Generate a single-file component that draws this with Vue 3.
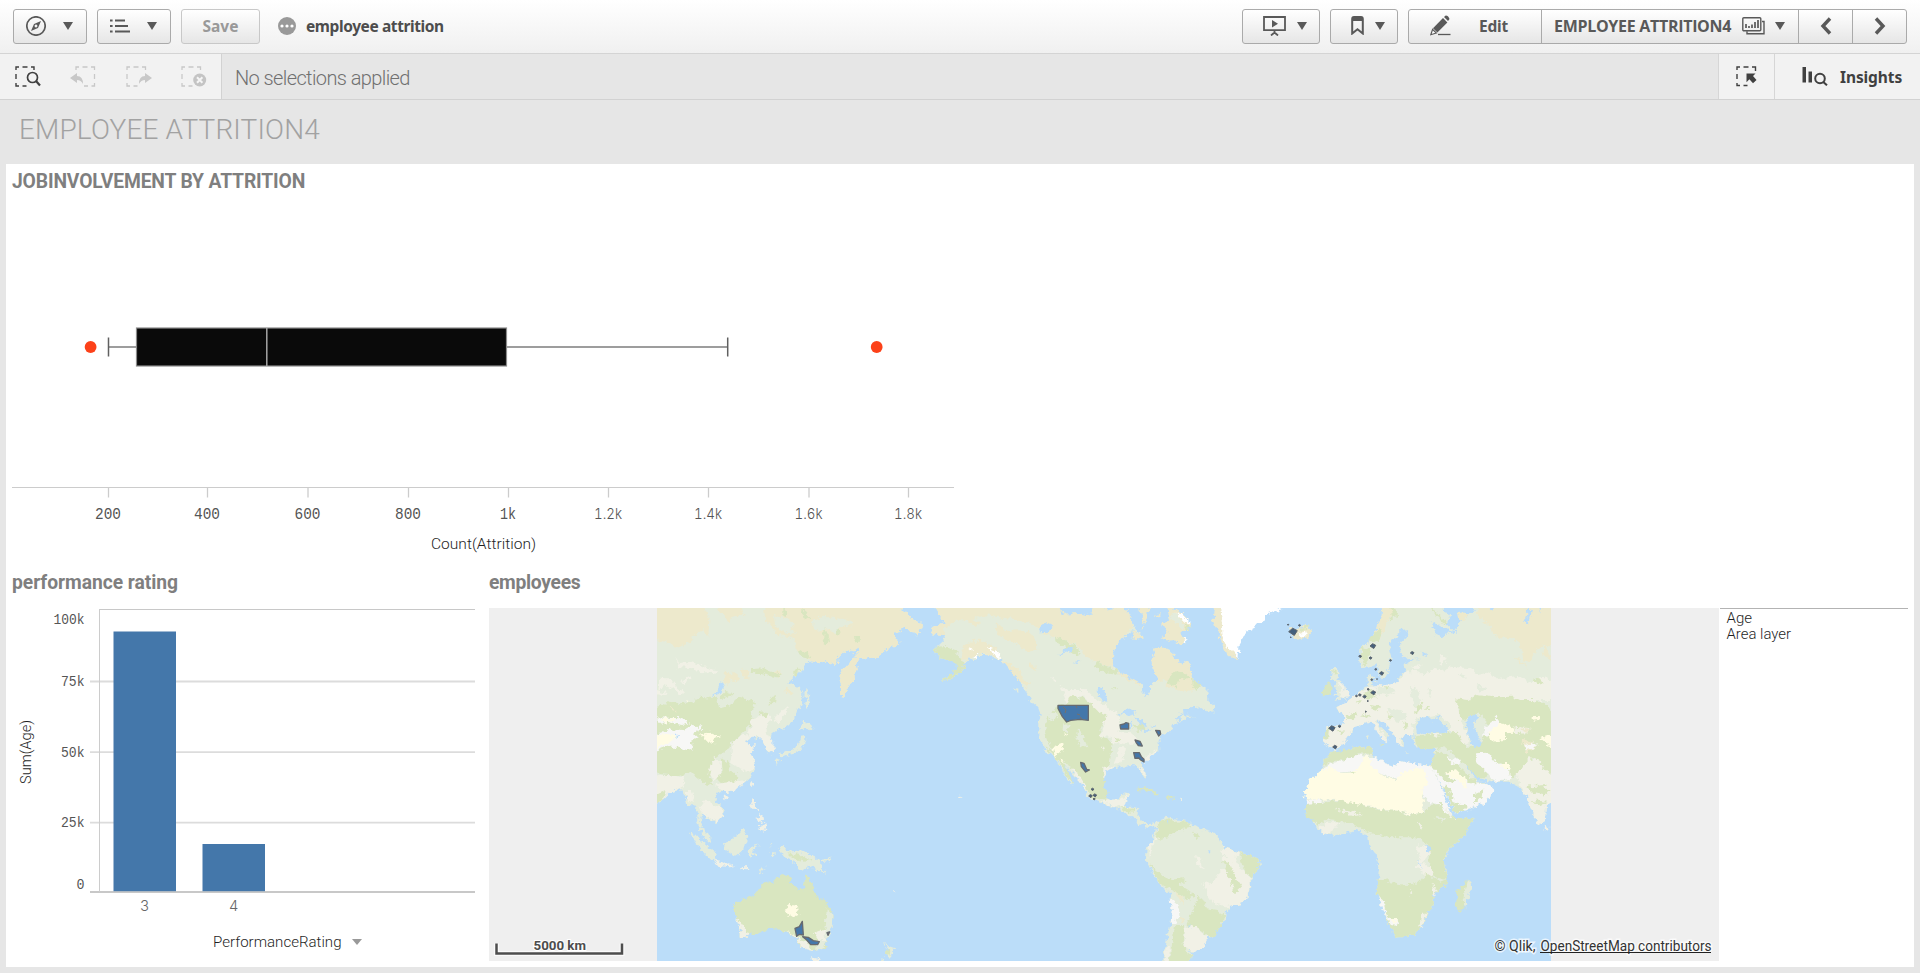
<script setup>
const boxTicks = [
  { x: 108.5, label: '200', w: 26 },
  { x: 207.5, label: '400', w: 26 },
  { x: 308, label: '600', w: 26 },
  { x: 408.5, label: '800', w: 26 },
  { x: 508.5, label: '1k', w: 16 },
  { x: 608.5, label: '1.2k', w: 28 },
  { x: 708.5, label: '1.4k', w: 28 },
  { x: 809, label: '1.6k', w: 28 },
  { x: 908.5, label: '1.8k', w: 28 },
]
const barTicks = [
  { y: 609.5, ly: 624, label: '100k', w: 31 },
  { y: 681.5, ly: 686, label: '75k', w: 23.5 },
  { y: 752.2, ly: 757, label: '50k', w: 23.5 },
  { y: 822.6, ly: 827, label: '25k', w: 23.5 },
  { y: 892, ly: 889, label: '0', w: 8 },
]
const bars = [
  { x: 113.5, y: 631.5, label: '3' },
  { x: 202.5, y: 844, label: '4' },
]

const sea = '#bbddf9', base = '#e4ecdc', tan = '#ede9cc', green = '#d9e6c0', pale = '#f1f1e6', sand = '#fffce4', ice = '#f7f7f6', white = '#fff'

const asia = [
  [base, '10,15 748,15 775,45 790,62 815,68 822,80 808,88 812,98 803,107 785,97 770,80 755,82 748,97 732,97 735,110 745,122 742,137 720,140 700,153 682,174 660,170 640,176 625,178 620,195 624,212 613,222 615,240 600,252 592,270 583,290 573,288 573,255 568,240 570,220 580,208 598,190 612,172 628,155 626,142 612,152 607,163 598,150 580,155 564,172 565,188 545,193 530,183 510,190 485,184 468,193 458,208 440,225 418,245 430,255 437,262 455,265 460,282 455,310 445,335 425,365 400,385 385,390 372,400 362,402 358,415 368,430 372,455 362,460 350,460 350,440 342,430 340,418 330,413 313,418 318,405 300,418 285,425 300,435 318,437 302,450 298,458 312,480 315,500 308,520 300,535 285,550 262,562 245,572 230,577 215,572 205,578 195,590 205,610 220,625 221,645 208,660 195,670 185,660 170,650 160,642 152,650 150,670 158,685 172,695 180,710 183,726 170,722 158,705 150,690 140,672 146,650 142,630 130,615 112,618 108,595 92,568 70,575 52,580 45,593 30,605 10,614'],
  [tan, '10,15 160,15 178,60 175,110 160,90 140,100 120,125 90,140 60,132 10,118'],
  [tan, '195,15 275,15 280,45 262,45 245,50 235,67 222,45'],
  [tan, '342,15 748,15 775,45 790,62 815,68 822,80 808,88 812,98 803,107 785,97 770,80 755,82 748,97 732,97 735,110 745,122 742,137 720,140 700,153 682,174 660,170 640,176 625,178 620,195 624,212 613,222 615,240 600,252 592,270 583,290 573,288 573,255 568,240 570,220 580,208 598,190 612,172 628,155 626,142 612,152 607,163 598,150 580,155 564,172 565,188 545,193 530,183 510,190 485,184 460,168 442,152 436,125 415,108 380,105 365,80 345,60'],
  [base, '485,60 520,50 560,55 600,60 610,75 570,82 560,100 545,95 530,85 500,92 488,78'],
  [base, '372,45 390,50 420,60 435,75 420,85 440,100 420,105 395,90 375,78'],
  [green, '458,24 478,50 468,65 455,45'], [green, '520,85 535,100 540,125 525,135 520,115'], [green, '612,108 630,108 630,122 615,124'], [green, '440,150 460,155 485,165 478,175 450,168'], [green, '430,210 452,205 440,225 430,228'],
  [green, '400,24 412,30 410,52 400,48'], [green, '560,90 572,95 568,104 560,100'],
  [pale, '75,165 85,190 120,185 150,195 170,205 205,212 190,220 150,215 130,205 85,202'], [pale, '30,235 60,235 80,260 100,275 90,285 70,268 45,255 25,270'], [pale, '90,245 125,228 120,240 100,252'], [pale, '20,270 50,278 45,288 20,282'],
  [tan, '225,215 262,222 265,245 240,240 232,255 222,240'], [tan, '275,205 298,215 295,240 278,228'], [tan, '370,210 392,215 388,235 375,232'], [tan, '405,262 428,280 420,285 408,278'],
  [green, '300,208 340,205 365,212 392,222 380,238 350,225 315,220'],
  [green, '10,325 60,305 110,312 150,290 200,295 208,325 240,315 265,290 315,305 305,345 310,370 295,385 270,405 245,425 240,445 215,460 205,468 190,480 180,505 178,535 188,555 165,550 145,535 120,515 85,528 10,520'],
  [green, '205,290 225,272 250,280 240,290 215,300'], [green, '365,290 378,288 375,305 358,315'], [green, '325,335 358,340 350,352 330,348'],
  [pale, '300,360 330,350 360,345 362,360 348,378 352,405 370,425 372,455 352,458 345,430 320,408 300,415 290,395 308,380'],
  [pale, '370,360 400,328 418,320 410,340 385,368'],
  [pale, '245,430 265,410 285,402 300,412 285,425 300,435 318,437 300,458 312,480 315,505 285,515 265,500 240,490 245,460'],
  [green, '215,475 235,490 240,510 265,530 262,550 240,552 210,548 200,535 218,515'],
  [pale, '180,500 195,475 215,485 215,515 200,540 190,545 176,520'],
  [pale, '10,530 50,525 95,530 105,545 95,565 60,578 35,600 10,610'], [green, '22,580 40,572 50,578 35,600 10,614'],
  [pale, '195,552 245,545 290,540 255,570 225,577'], [pale, '148,625 165,600 190,615 215,625 221,645 200,668 175,650 155,640'],
  [pale, '108,570 125,570 130,590 118,610 108,595'],
  [ice, '10,405 40,395 70,388 100,390 118,380 118,370 140,378 160,375 155,388 132,398 143,412 118,425 133,445 110,450 80,440 50,440 10,455'],
  [ice, '25,352 90,355 115,365 95,375 55,365 25,372'],
  [sand, '10,405 70,403 88,412 50,428 10,450'], [sand, '150,403 178,398 198,408 217,408 190,415 196,433 180,430 165,415'], [sand, '35,355 75,356 80,364 40,365'],
  [sand, '108,300 118,304 112,310'], [tan, '50,315 65,320 78,335 62,328'], [sea, '78,410 86,405 90,410 82,416'],
  [sea, '183,288 205,270 215,250 224,246 220,262 210,278 190,291'],
  [base, '467,266 474,280 480,305 472,325 465,322 468,300 463,285'], [base, '460,362 475,372 488,378 478,388 462,385 454,392 452,382'],
  [base, '455,403 464,405 466,420 460,440 450,452 435,458 415,463 395,472 388,465 405,455 425,452 440,442 450,425'], [base, '373,474 388,478 390,484 382,494 375,485'],
  [pale, '305,546 313,550 308,564 300,558'], [pale, '225,586 233,592 226,601 218,594'],
  [pale, '308,597 318,603 316,618 328,634 320,632 305,622 303,608'], [pale, '328,638 340,645 342,662 330,668 316,656 330,655'], [pale, '345,668 349,685 342,696 334,686 320,684 335,676'],
  [base, '120,696 135,702 155,725 180,745 200,760 195,784 180,776 160,757 140,732'], [pale, '194,783 215,785 240,792 256,798 240,802 205,797'], [pale, '273,801 294,802 290,808 276,806'], [base, '328,813 348,801 345,808 332,817'],
  [base, '219,730 240,722 262,705 278,687 290,697 292,712 285,730 280,750 262,769 240,760 225,750'], [base, '297,742 330,733 318,740 308,748 324,772 312,768 305,758 302,777 296,768'], [base, '358,728 364,735 360,745'], [base, '358,760 378,760 376,766 362,766'],
  [base, '385,745 400,740 412,755 440,752 465,758 490,768 510,785 512,800 528,818 505,812 485,797 465,808 438,803 438,788 415,778 400,765'], [green, '415,760 450,765 485,780 465,785 430,775'], [base, '515,780 535,776 545,769 537,784 520,786'],
  [green, '255,910 275,900 310,888 325,865 345,845 370,850 375,835 395,824 422,830 420,848 440,865 455,873 463,860 465,830 470,821 478,838 488,852 495,880 510,895 530,910 545,930 551,955 545,980 535,1005 528,1030 525,1042 505,1048 490,1053 465,1045 445,1030 435,1012 420,1005 405,995 378,985 350,990 325,1000 295,1005 285,1015 268,1012 272,990 262,965 255,940'],
  [pale, '257,955 272,965 285,985 298,1002 285,1015 268,1012 272,990'], [base, '530,925 551,945 548,975 530,1020 515,1048 495,1053 500,1030 520,1005 528,975'], [pale, '490,1000 525,985 528,1020 505,1020'], [pale, '400,990 425,1000 450,1020 480,1035 490,1053 460,1045 435,1012'], [sand, '408,925 420,915 440,918 445,945 430,952 405,935'],
  [pale, '483,1072 512,1078 505,1090 488,1090'], [base, '702,1022 715,1038 735,1045 728,1062 715,1076 708,1060 712,1045'], [green, '710,1045 722,1050 718,1065 708,1062'], [base, '690,1090 695,1074 706,1078 700,1090'], [pale, '729,870 738,872 732,876'],
]

const america = [
  [base, '40,15 60,50 75,65 50,75 30,85 40,103 75,105 70,120 48,140 45,155 60,175 85,185 110,185 115,205 90,225 65,243 90,238 115,222 135,200 130,190 145,175 165,180 175,165 205,165 235,180 255,185 270,205 285,225 300,245 310,265 325,285 335,305 352,320 362,345 355,375 355,410 365,430 380,455 400,465 412,485 425,510 445,540 460,558 455,545 440,520 430,500 425,488 440,500 460,525 480,545 495,570 498,590 520,600 550,613 580,618 600,630 625,645 645,658 655,670 680,681 705,674 700,667 685,670 665,662 655,645 658,625 630,620 610,622 618,600 628,580 610,577 595,598 570,600 555,585 550,555 553,530 560,510 580,505 610,500 635,498 655,500 665,520 675,537 681,530 672,508 665,490 680,480 700,465 718,445 715,425 722,408 735,400 750,395 755,378 775,368 800,355 832,350 800,350 790,335 810,322 835,320 850,330 880,338 884,318 865,300 862,270 845,258 820,240 815,215 800,180 790,195 765,175 750,150 725,142 698,143 705,165 695,185 697,205 712,228 705,245 690,255 690,275 680,290 668,278 665,255 640,240 600,225 578,195 580,150 600,118 608,115 640,90 670,112 640,75 630,50 610,15'],
  [tan, '40,15 610,15 630,50 640,80 608,115 600,118 580,150 578,205 540,190 500,172 480,145 450,125 410,112 375,100 340,72 285,58 190,45 150,60 110,62 75,85 70,105 40,103 30,85 50,75 75,65 60,50'],
  [tan, '230,65 255,90 300,88 340,105 355,148 320,158 290,130 260,122 232,102'], [tan, '130,135 160,122 195,122 225,145 245,175 205,165 175,160 145,178 120,180'],
  [tan, '245,180 275,190 300,215 315,245 330,250 320,262 285,230'], [tan, '330,190 350,205 345,212 330,205'], [tan, '150,50 180,70 165,78 145,65'],
  [green, '408,110 440,122 475,145 480,170 455,158 430,140 410,128'], [green, '530,185 560,200 590,210 592,222 545,215 525,200'],
  [green, '48,140 80,138 105,150 130,185 135,200 115,222 90,238 65,243 90,225 112,205 108,188 85,185 60,175 45,155'],
  [tan, '592,212 630,232 662,248 665,256 640,246 598,226'],
  [tan, '698,143 725,142 750,150 765,175 790,195 800,180 815,215 820,240 845,258 830,268 790,275 740,262 742,240 705,245 712,228 697,205 695,185 705,165'],
  [green, '742,240 765,210 785,215 810,232 800,240 775,235 770,260 745,252'], [green, '815,238 845,255 832,270 820,262'],
  [white, '200,140 222,150 245,165 240,178 225,165'], [white, '160,170 175,160 170,178'], [white, '145,150 160,140 155,155'],
  [green, '440,270 460,290 490,295 515,312 550,332 560,350 545,380 538,402 575,425 570,490 550,510 553,550 562,592 530,600 505,580 490,545 462,515 440,490 415,470 400,455 385,430 375,400 380,360 395,335 415,318 440,310'],
  [green, '370,435 400,455 430,478 460,552 440,530 425,500 405,470'],
  [pale, '422,258 445,270 470,270 500,270 530,300 565,325 600,345 600,370 592,395 630,400 655,420 640,435 600,430 580,430 570,410 532,408 550,390 550,365 560,345 530,330 510,310 490,290 450,288 440,310'],
  [base, '475,385 490,410 502,440 480,445 470,415'], [base, '430,370 450,375 440,400 428,390'], [base, '385,345 410,335 415,350 390,362'],
  [pale, '545,435 555,445 548,450'], [pale, '600,440 615,445 605,490 585,490'], [pale, '550,500 585,500 560,515 550,540'], [pale, '450,505 475,520 498,560 500,575 475,540'], [pale, '390,232 412,238 405,245'],
  [pale, '555,598 600,600 615,590 628,580 618,600 612,622 585,618 540,605'], [pale, '655,500 672,508 680,532 668,520'], [pale, '670,478 715,440 700,465 675,490'],
  [green, '605,622 645,628 640,638 615,635'], [green, '565,575 555,590 560,600 540,595'],
  [sand, '398,445 415,435 430,432 432,448 415,460 405,468'], [sand, '430,400 438,402 434,412'], [sand, '418,478 432,482 430,492'],
  [green, '642,375 665,370 680,392 650,392'], [green, '585,412 602,418 592,424'], [green, '578,260 592,266 582,270'],
  [sea, '355,85 378,68 400,78 385,95 360,97'], [sea, '415,165 430,150 455,138 460,150 435,158'], [sea, '458,188 478,186 470,192'], [sea, '530,262 548,264 562,290 555,306 540,292'],
  [sea, '598,342 625,324 648,342 625,348'], [sea, '628,362 636,356 638,378 630,392'], [sea, '640,352 668,360 682,385 665,375 648,362'], [sea, '664,396 695,385 685,395'], [sea, '690,378 712,372 705,382'],
  [sea, '420,15 432,45 470,38 500,45 520,40 520,15'], [sea, '545,15 560,28 590,24 595,15'], [sea, '772,365 795,335 780,342 768,358'],
  [tan, '638,90 650,98 672,112 650,120 635,118'], [tan, '650,15 672,50 668,90 690,24 700,15'], [tan, '700,50 722,38 720,52'],
  [tan, '728,70 750,60 740,15 775,30 800,55 815,75 805,90 785,90 785,108 800,125 780,138 765,120 745,122 725,112 745,100'], [base, '745,45 770,40 790,70 785,90 770,75'], [white, '765,34 785,42 812,68 808,76 790,62'], [green, '790,72 812,80 805,90'],
  [white, '788,112 800,120 795,126'],
  [green, '650,567 680,561 700,572 718,583 700,583 680,571 655,571'], [green, '738,590 755,588 762,598 742,599'], [pale, '780,596 788,598 783,601'], [pale, '114,588 122,587 124,593 117,593'], [base, '285,262 298,268 292,275'],
  [tan, '885,15 905,15 910,80 925,140 945,160 955,178 940,175 918,158 905,130 895,90 880,75'], [white, '900,15 1085,15 1085,24 1038,45 1025,70 980,95 960,130 955,172 945,160 925,150 908,115 905,60'],
  [base, '700,675 715,665 738,650 765,658 800,662 825,675 850,690 880,698 900,715 910,740 935,748 960,758 990,765 1015,778 1020,795 1010,812 995,830 990,865 980,895 965,912 930,921 918,935 915,960 905,975 890,995 880,1013 860,1010 855,1035 840,1050 810,1052 818,1068 795,1090 728,1090 735,1050 745,1000 755,950 755,900 750,880 715,850 695,815 678,780 680,745 700,715 708,690'],
  [green, '720,662 745,655 765,665 805,664 815,680 775,690 745,710 705,722 712,690'], [green, '820,695 838,702 832,718 820,708'], [pale, '685,735 705,715 730,710 700,725 690,775'],
  [green, '690,790 710,810 745,840 790,835 800,845 775,852 805,870 830,890 800,900 775,880 745,865 715,848'],
  [pale, '850,850 880,845 900,815 920,800 905,775 945,765 955,800 985,820 992,850 980,895 965,912 930,921 890,912 865,895'], [pale, '825,765 850,775 840,795 860,810 835,800'], [pale, '910,740 960,760 940,775 905,765'],
  [green, '960,760 990,765 1015,778 1018,800 995,830 975,815 965,790'], [green, '905,780 930,790 945,830 965,860 945,880 930,840'],
  [green, '835,890 850,900 860,925 890,930 912,945 905,975 880,1013 860,1005 835,985 800,975 812,945 822,925'],
  [pale, '790,985 820,975 850,1000 862,1010 855,1038 835,1052 810,1050 792,1042'], [green, '765,978 792,978 788,1030 800,1052 818,1068 795,1090 745,1090 755,1040'], [pale, '740,1045 750,1040 745,1090 732,1090'],
  [ice, '752,895 775,915 778,945 765,975 752,970 755,930'], [tan, '765,870 790,895 792,912 772,895'], [tan, '778,945 795,965 785,970'], [sea, '864,750 872,752 868,758'], [sea, '740,660 748,664 744,672'], [sea, '808,972 814,975 810,980'],
]

const africa = [
  [base, '456,15 455,55 440,80 430,115 400,135 388,150 388,185 400,205 425,195 440,190 445,215 455,235 475,225 475,200 485,175 478,150 480,125 500,110 510,90 535,88 530,110 510,130 512,160 530,178 560,176 575,172 540,185 523,190 528,215 510,225 505,245 480,250 450,257 430,260 420,250 430,235 425,222 412,230 415,262 400,265 385,280 370,295 345,312 318,322 325,332 342,345 342,370 330,380 290,378 288,400 282,430 300,440 312,450 340,435 350,415 365,395 375,380 400,372 425,365 435,385 460,405 465,430 475,420 470,400 450,380 440,362 448,358 470,380 490,400 500,420 516,442 522,430 510,410 525,405 550,405 553,438 590,447 615,443 615,465 605,495 570,495 550,490 505,482 500,500 465,490 430,470 430,450 425,440 370,445 330,455 305,455 285,480 275,510 240,540 222,575 230,605 225,635 245,660 265,690 295,705 340,700 380,690 415,710 418,740 440,770 450,810 445,850 440,880 460,930 480,980 500,1014 545,1005 580,975 595,935 610,925 612,880 645,860 650,825 640,780 660,740 700,710 720,680 731,653 700,657 670,650 650,610 625,570 605,530 595,500 605,510 630,550 660,600 675,640 720,628 770,605 793,570 775,550 760,545 740,545 720,515 705,500 720,500 745,535 790,545 840,545 860,555 875,575 895,580 900,620 925,675 945,660 948,615 975,595 975,15'],
  [tan, '458,15 485,15 500,35 470,60 465,90 445,115 430,115 440,80 455,55'], [green, '395,140 415,145 418,165 405,200 392,170'], [green, '418,120 440,128 455,95 445,90'],
  [green, '480,15 505,40 495,48 475,70 485,45'], [green, '600,15 625,45 655,70 640,70 610,40'],
  [tan, '735,38 762,15 975,15 975,140 940,135 920,150 905,180 885,185 872,150 875,135 850,115 810,112 790,105 785,80 765,65'], [tan, '945,120 962,180 940,165'], [tan, '850,165 880,190 895,205 870,190'],
  [pale, '505,245 525,215 560,212 580,225 610,205 640,215 660,200 720,205 745,225 780,215 800,238 860,228 900,250 940,230 975,245 975,300 700,300 680,305 690,350 700,385 660,370 625,345 570,350 545,375 555,405 525,405 510,410 516,442 500,420 490,400 465,375 448,358 435,362 460,405 475,420 465,430 435,385 425,365 400,372 375,380 350,415 340,435 312,450 300,440 282,430 290,378 330,380 342,370 342,345 320,325 385,280 415,262 450,257 480,250'],
  [pale, '630,165 650,170 640,195 625,185'], [pale, '540,200 575,195 560,210'], [base, '440,260 480,262 500,275 470,285 440,280'], [base, '475,325 520,335 535,360 500,365 480,345'], [base, '540,260 560,265 575,300 555,320 545,290'],
  [green, '350,345 380,335 375,355 355,360'], [green, '400,285 425,270 440,290 415,300'], [green, '420,315 450,322 440,332 422,325'], [green, '560,315 580,310 570,335 555,338'], [green, '470,340 495,350 480,358'], [green, '288,385 300,380 298,410 282,420'], [green, '395,345 410,340 420,355'], [green, '520,365 535,380 525,395'],
  [green, '375,305 395,300 390,312'], [green, '455,255 475,262 468,270'], [green, '580,325 605,318 598,328'], [green, '320,395 345,390 335,402'], [green, '910,235 928,238 940,250 918,250'], [base, '590,260 610,270 600,290'], [base, '690,215 710,230 695,240'], [base, '740,255 770,265 750,275'],
  [green, '675,295 715,300 740,285 790,292 850,290 870,300 910,300 945,310 975,345 975,540 960,525 935,500 915,470 890,490 870,515 840,540 780,530 760,500 730,460 690,450 700,420 710,440 730,440 755,430 780,380 745,340 720,350 690,360 690,335'],
  [pale, '660,365 690,375 715,400 715,435 690,425 660,395'],
  [green, '553,410 590,402 640,400 680,395 705,440 740,465 770,520 770,535 745,535 720,510 690,480 650,445 590,447 560,440'], [pale, '600,402 640,402 620,412'],
  [ice, '735,460 775,458 800,490 835,495 842,540 790,545 765,510 740,490'], [sand, '812,492 840,492 838,508 815,505'],
  [ice, '760,385 785,365 800,350 808,375 790,395 760,412'], [sand, '775,400 810,370 845,378 858,398 825,400 825,420 785,425'],
  [sand, '905,348 930,348 928,360 905,362'], [sand, '928,415 975,400 975,445 945,430'], [pale, '850,380 905,385 890,400 855,402'], [tan, '870,415 905,425 915,445 890,460'], [ice, '880,435 920,430 915,445 885,450'], [tan, '870,385 905,390 890,396'],
  [pale, '860,520 880,500 895,475 925,480 945,510 975,530 975,600 948,615 945,660 925,675 900,620 890,585 870,560'], [green, '890,560 940,555 962,570 950,585 905,575'], [green, '905,600 950,605 925,620'],
  [ice, '618,470 650,480 690,500 740,548 775,550 793,570 770,605 720,628 675,640 645,575 605,500'], [green, '605,495 620,450 650,465 700,510 740,550 720,550 680,525 640,520 680,545 650,550 625,520'], [sand, '640,520 680,510 710,540 708,570 690,545'], [green, '640,555 660,570 675,610 710,618 700,632 675,640 655,595'], [green, '735,580 760,568 755,590 735,610'], [ice, '650,475 690,480 695,495 665,490'],
  [ice, '275,512 300,490 330,485 380,463 430,470 465,490 500,500 505,482 550,490 605,500 630,555 650,605 670,655 640,640 630,612 600,610 560,560 430,510 300,520'],
  [green, '285,480 305,455 370,445 425,440 430,462 385,460 340,480 300,485 278,500'], [sand, '275,510 305,502 330,520 360,518 390,500 400,470 415,465 425,500 465,530 500,542 515,518 575,502 590,530 595,550 575,570 582,600 575,640 540,642 505,632 450,630 430,618 350,612 330,600 225,598 222,575 240,540'],
  [green, '360,515 372,512 378,520 362,522'], [ice, '228,600 265,598 280,608 228,612'],
  [green, '228,612 280,608 330,602 380,612 430,622 450,632 505,632 540,644 580,638 605,615 635,612 645,640 670,650 700,657 731,653 720,680 700,710 660,740 640,775 648,825 650,840 610,830 595,805 600,770 590,730 560,712 480,712 420,700 385,682 340,665 290,660 265,675 235,655 225,635'],
  [pale, '310,625 350,632 400,645 370,648'], [pale, '560,668 578,675 570,683'], [pale, '265,690 290,665 330,668 310,690 290,702'], [base, '610,650 650,655 635,665'], [pale, '645,625 665,640 670,658 655,650'],
  [pale, '555,735 590,740 600,760 575,790 600,800 612,825 590,830 560,800 570,775'], [sea, '588,740 598,735 605,750 592,758'], [sea, '562,780 570,790 580,812 572,800'],
  [green, '446,838 475,835 480,850 540,855 575,840 590,820 630,845 650,840 645,860 612,880 610,925 595,935 580,975 545,1005 500,1014 480,980 460,930 440,880'],
  [ice, '444,890 458,900 465,925 472,955 460,935'], [ice, '468,950 500,960 505,978 485,975'], [sand, '480,955 500,962 498,972'], [pale, '575,938 592,938 575,985 568,975'], [pale, '605,850 620,870 612,890'], [pale, '540,872 548,878 542,884'],
  [sea, '557,378 572,350 590,348 605,362 635,343 628,356 662,392 640,400 590,400 560,396'], [sea, '703,362 735,341 748,352 730,368 738,395 757,432 730,442 718,415 712,390'], [sea, '603,70 612,66 640,85 682,95 650,98 638,112 615,102'], [sea, '630,15 735,15 725,40 695,60 672,92 650,70 660,50'],
  [tan, '680,35 695,35 715,45 700,60 685,62'], [sea, '765,15 780,28 800,15'], [sea, '890,15 905,35 895,70 882,68 892,45'], [sea, '925,15 932,40 938,15'], [sea, '575,155 590,160 590,172 578,165'],
  [pale, '945,673 958,680 955,692 944,690'], [green, '715,836 723,855 710,890 700,930 685,936 674,918 680,870 700,858'], [base, '715,836 723,855 705,925 698,900 710,860'],
  [base, '315,198 328,212 322,235 340,250 345,270 360,280 355,292 330,300 313,303 325,290 312,285 325,270 310,262 318,247 303,235 305,212'], [pale, '325,245 340,250 345,270 360,280 355,292 330,298 335,270'], [green, '308,210 322,215 315,225'],
  [green, '283,256 298,246 306,262 300,282 278,289'], [tan, '174,76 195,92 220,74 232,76 248,95 238,110 200,119 185,108'], [white, '205,100 225,95 230,108 210,110'], [green, '205,84 238,76 230,88 210,90'],
  [base, '414,402 420,408 417,416 412,410'], [green, '447,430 460,436 455,442'], [base, '525,457 540,459 530,461'], [base, '432,240 440,240 438,248'],
]

const zones = [
  [650, '435,985 448,980 457,964 460,1005 448,1003 440,1009', '458,1010 475,1012 490,1022 508,1025 503,1034 482,1034 470,1020', '531,998 539,996 534,1006'],
  [920, '414,316 505,316 505,361 480,358 452,361 440,366 427,350 414,325', '600,375 612,372 618,368 626,370 626,387 602,387', '707,391 720,392 722,402 716,408', '645,420 660,424 667,438 655,437 648,427', '641,458 658,458 664,470 672,478 672,486 662,480 656,474 645,475', '482,487 492,490 500,508 508,510 497,516 484,500'],
]
const dots = [
  [920, 517, 568, 4], [920, 511, 588, 5], [920, 524, 586, 5], [920, 522, 597, 3],
  [1230, 188, 95, 12], [1230, 174, 74, 2], [1230, 208, 76, 3], [1230, 182, 112, 1.5], [1230, 428, 138, 8], [1230, 390, 169, 4], [1230, 421, 174, 4], [1230, 481, 181, 3], [1230, 546, 159, 5],
  [1230, 437, 208, 3], [1230, 454, 220, 6], [1230, 425, 239, 3], [1230, 441, 237, 1.5], [1230, 414, 268, 3], [1230, 429, 278, 7], [1230, 403, 290, 5], [1230, 389, 285, 4], [1230, 379, 288, 3], [1230, 413, 303, 2],
  [1230, 407, 335, 2], [1230, 305, 385, 9], [1230, 328, 379, 4], [1230, 314, 441, 6],
]
const regions = [
  { x: 650, shapes: asia },
  { x: 920, shapes: america },
  { x: 1230, shapes: africa },
]
</script>

<template>
  <div class="app">
    <header class="toolbar">
      <button class="btn nav">
        <svg width="20" height="20" viewBox="0 0 20 20"><circle cx="10" cy="10" r="9.2" fill="none" stroke="#595959" stroke-width="1.7" /><path fill-rule="evenodd" d="M15 5 12 12 5 15 8 8zM10 8.6a1.4 1.4 0 1 0 .01 0z" fill="#595959" /></svg>
        <i class="caret" />
      </button>
      <button class="btn nav">
        <svg width="20" height="14" viewBox="0 0 20 14"><path d="M0 1.4h2.6M0 6.9h2.6M0 12.4h2.6M5 1.4h10M5 6.9h13M5 12.4h15" transform="translate(0 .1)" stroke="#595959" stroke-width="2.2" /></svg>
        <i class="caret" />
      </button>
      <button class="btn save">Save</button>
      <svg class="app-dot" width="18" height="18" viewBox="0 0 18 18"><circle cx="9" cy="9" r="9" fill="#999" /><circle cx="4" cy="9" r="1.6" fill="#fff" /><circle cx="9" cy="9" r="1.6" fill="#fff" /><circle cx="14" cy="9" r="1.6" fill="#fff" /></svg>
      <span class="app-name">employee attrition</span>

      <div class="right">
        <button class="btn story">
          <svg width="24" height="20" viewBox="0 0 24 20" fill="none" stroke="#595959"><path d="M1 1h21v13.2H1z" stroke-width="1.8" /><path d="M11.5 14v3M8 19.5l3.5-3 3.5 3" stroke-width="1.8" /><path d="M9 4v7.4l6-3.7z" fill="#595959" stroke="none" /></svg>
          <i class="caret" />
        </button>
        <button class="btn mark">
          <svg width="13" height="19" viewBox="0 0 13 19"><path d="M1.200 17.500V3Q1.200 1 3 1h7q1.800 0 1.800 2v14.500l-5.300-4.300z" fill="none" stroke="#595959" stroke-width="2" /><path d="M1 5V1.500h11V5z" fill="#595959" /></svg>
          <i class="caret" />
        </button>
        <div class="group">
          <button class="seg edit">
            <svg width="21" height="21" viewBox="0 0 21 21"><path d="M3 13.200 13 3l4.400 4.400L7.400 17.600z" fill="#595959" /><path d="M2.600 14.300 6.300 18 .8 19.700z" fill="#fff" stroke="#595959" stroke-width="1.200" /><path d="M14 2 15.700.5q3 .4 3.800 3.600L18 6z" fill="#595959" /><path d="M8 19.500h12.500" stroke="#595959" stroke-width="1.300" /></svg>
            <span>Edit</span>
          </button>
          <button class="seg sheet">
            <span>EMPLOYEE ATTRITION4</span>
            <svg width="23" height="18" viewBox="0 0 23 18" fill="none" stroke="#595959" stroke-width="1.4"><rect x=".8" y=".8" width="18" height="13" rx="1" /><path d="M20 4.500h2v12.300H5v-2.500" /><path d="M4 11V7M7 11V9M10 11V7.500M13 11V5M16 11V3" stroke-width="1.700" /></svg>
            <i class="caret" />
          </button>
          <button class="seg arrow"><svg width="12" height="18" viewBox="0 0 12 18"><path d="M10 1.500 3 9l7 7.500" fill="none" stroke="#595959" stroke-width="3.400" /></svg></button>
          <button class="seg arrow last"><svg width="12" height="18" viewBox="0 0 12 18"><path d="M2 1.500 9 9l-7 7.500" fill="none" stroke="#595959" stroke-width="3.400" /></svg></button>
        </div>
      </div>
    </header>

    <section class="selections">
      <div class="sel-tools">
        <svg width="26" height="22" viewBox="0 0 26 22" fill="none" stroke="#404040" stroke-width="1.400"><path d="M1 4V1h3M7.500 1h5M16 1h3v3M1 8v5M1 17v3h3M7.500 20h4" /><circle cx="17.500" cy="11.500" r="5" stroke-width="1.700" /><path d="m21 15 4 4.500" stroke-width="2.200" /></svg>
        <svg width="26" height="22" viewBox="0 0 26 22" fill="none" stroke="#c8c8c8" stroke-width="1.300"><path d="M6 4V1h3M12.500 1h5M21 1h3.500v3M24.500 8v5M24.500 17v3h-3M18 20h-4" /><path d="M0 12 7 7v3q6 0 6 8-2-4-6-4v3z" fill="#c8c8c8" stroke="none" /></svg>
        <svg width="26" height="22" viewBox="0 0 26 22" fill="none" stroke="#c8c8c8" stroke-width="1.300"><path d="M1 4V1h3M7.500 1h5M16 1h3.500v3M1 8v5M1 17v3h3M7.500 20h4" /><path d="m26 12-7-5v3q-6 0-6 8 2-4 6-4v3z" fill="#c8c8c8" stroke="none" /></svg>
        <svg width="26" height="22" viewBox="0 0 26 22" fill="none" stroke="#c8c8c8" stroke-width="1.300"><path d="M1 4V1h3M7.500 1h5M16 1h3.500v3M1 8v5M1 17v3h3M7.500 20h4" /><circle cx="18.700" cy="14" r="6.500" fill="#c4c4c4" stroke="none" /><path d="m16 11.300 5.400 5.400m0-5.400L16 16.700" stroke="#f5f5f5" stroke-width="2" /></svg>
      </div>
      <div class="sel-text"><span>No selections applied</span></div>
      <div class="sel-mode">
        <svg width="22" height="21" viewBox="0 0 22 21"><path d="M1 4V1h3M7.500 1h5M16 1h3.500v4M1 8v5M1 17v2.500h3M7.500 19.500h4" fill="none" stroke="#404040" stroke-width="1.400" /><path d="M10.500 7.500h9l-2.500 2.500 3.500 4-3.500 3.200-3.600-3.900-2.900 2.900z" fill="#404040" /></svg>
      </div>
      <div class="insights">
        <svg width="26" height="19" viewBox="0 0 26 19"><path d="M.5 0H4v15.500H.5zM6.500 4.500H10v11H6.500z" fill="#404040" /><circle cx="18" cy="11.500" r="4.800" fill="none" stroke="#404040" stroke-width="2" /><path d="m21 14.800 4 3.500" stroke="#404040" stroke-width="2" /></svg>
        <span>Insights</span>
      </div>
    </section>

    <h1><span>EMPLOYEE ATTRITION4</span></h1>

    <main class="sheet-body">
      <section>
        <h2 class="t1"><span>JOBINVOLVEMENT BY ATTRITION</span></h2>
        <svg class="chart" width="1908" height="370" viewBox="6 198 1908 370">
          <g stroke="#7d7d7d" stroke-width="1.500">
            <path d="M108.500 347H136M507 347H728" />
            <path d="M108.500 337.500v19M727.700 337.500v19" stroke="#606060" />
            <rect x="136.500" y="328" width="370" height="38" fill="#0a0a0a" stroke="#8c8c8c" stroke-width="1.200" />
            <path d="M266.800 328v38" stroke="#a6a6a6" />
          </g>
          <circle cx="90.600" cy="347" r="5.900" fill="#fc4119" />
          <circle cx="876.700" cy="347" r="5.900" fill="#fc4119" />
          <path d="M12 487.500H954" stroke="#ccc" />
          <g v-for="t in boxTicks" :key="t.label">
            <path :d="`M${t.x} 488v9.500`" stroke="#ccc" stroke-width="1.300" />
            <text :class="t.label.includes('.') ? 'num' : 'mono'" :x="t.x - t.w / 2 - 0.500" y="519" :textLength="t.w" lengthAdjust="spacingAndGlyphs" :font-size="t.label.includes('.') ? 15 : 16">{{ t.label }}</text>
          </g>
          <text class="axis" x="431" y="549" textLength="105" lengthAdjust="spacingAndGlyphs">Count(Attrition)</text>
        </svg>
      </section>

      <div class="row">
        <section class="bar-col">
          <h2><span class="t2">performance rating</span></h2>
          <svg class="chart" width="483" height="359" viewBox="6 608 483 359">
            <g v-for="(t, i) in barTicks" :key="t.label">
              <path :d="`M${i ? 90 : 99} ${t.y}H475`" :stroke="i && i < 4 ? '#dcdcdc' : '#c8c8c8'" :stroke-width="i === 0 ? 1.200 : 1.800" />
              <text class="mono" :x="84.500 - t.w" :y="t.ly" :textLength="t.w" lengthAdjust="spacingAndGlyphs" font-size="14.500">{{ t.label }}</text>
            </g>
            <path d="M99.500 609V892" stroke="#ccc" />
            <g v-for="b in bars" :key="b.label">
              <rect :x="b.x" :y="b.y" width="62.500" :height="891.200 - b.y" fill="#4477aa" />
              <text class="num cat" :x="b.x + 31.200" y="911" text-anchor="middle" font-size="14.500">{{ b.label }}</text>
            </g>
            <text class="axis" x="213" y="947" textLength="128.500" lengthAdjust="spacingAndGlyphs">PerformanceRating</text>
            <path d="M352 939h10l-5 6z" fill="#999" />
            <text class="axis" transform="translate(30.500 784) rotate(-90)" textLength="64" lengthAdjust="spacingAndGlyphs">Sum(Age)</text>
          </svg>
        </section>

        <section class="map-col">
          <h2><span class="t3">employees</span></h2>
          <svg class="chart" width="1230" height="353" viewBox="489 608 1230 353">
            <defs>
              <clipPath id="world"><rect x="657" y="608" width="894" height="353" /></clipPath>
              <filter id="coast" x="0" y="0" width="100%" height="100%">
                <feTurbulence type="fractalNoise" baseFrequency="0.22" numOctaves="3" seed="4" />
                <feDisplacementMap in="SourceGraphic" scale="7" xChannelSelector="R" yChannelSelector="G" />
              </filter>
            </defs>
            <rect x="489" y="608" width="1230" height="353" fill="#efefef" />
            <g clip-path="url(#world)">
              <rect x="657" y="608" width="894" height="353" fill="#bbddf9" />
              <g filter="url(#coast)">
                <g v-for="r in regions" :key="r.x" :transform="`translate(${r.x} 600) scale(.33333)`">
                  <polygon v-for="(s, i) in r.shapes" :key="i" :points="s[1]" :fill="s[0]" />
                </g>
              </g>
              <g v-for="z in zones" :key="z[0]" :transform="`translate(${z[0]} 600) scale(.33333)`" fill="#4477aa" stroke="#666a70" stroke-width="4" stroke-linejoin="round">
                <polygon v-for="p in z.slice(1)" :key="p" :points="p" />
              </g>
              <path d="M1063 707l3 3-1 3M1076 706l1 2M1077 714l3 1M1080 717l2 2" stroke="#77706a" fill="none" />
              <path v-for="(d, i) in dots" :key="i" :d="`M${d[0] + d[1] / 3 - d[3] / 3} ${600 + d[2] / 3}l${d[3] / 3} ${-d[3] / 3.500} ${d[3] / 2.600} ${d[3] / 5} ${-d[3] / 4} ${d[3] / 2.500}z`" fill="#44607c" stroke="#5b636c" stroke-width="1" />
            </g>
            <path d="M496.500 943.500v10h125.500v-10" fill="none" stroke="#fff" stroke-width="5" opacity=".7" />
            <path d="M496.500 943.500v10h125.500v-10" fill="none" stroke="#4d4d4d" stroke-width="2.500" />
            <text class="scale" x="533.500" y="950" textLength="52.500" lengthAdjust="spacingAndGlyphs">5000 km</text>
            <text class="credit" x="1494.500" y="950.500" textLength="41" lengthAdjust="spacingAndGlyphs">© Qlik,</text>
            <text class="credit link" x="1540.500" y="950.500" textLength="171" lengthAdjust="spacingAndGlyphs">OpenStreetMap contributors</text>
            <path d="M1540 952.500h171" stroke="#222" />
          </svg>
        </section>

        <aside class="legend">
          <div class="legend-box">
            <svg class="chart" width="188" height="40" viewBox="1720 609 188 40">
              <text class="axis leg" x="1726.500" y="623" textLength="25.500" lengthAdjust="spacingAndGlyphs">Age</text>
              <text class="axis leg" x="1726.500" y="639" textLength="64.500" lengthAdjust="spacingAndGlyphs">Area layer</text>
            </svg>
          </div>
        </aside>
      </div>
    </main>
  </div>
</template>

<style>
html, body { margin: 0; background: #e6e6e6; overflow: hidden; }
</style>

<style scoped>
.app { width: 1920px; height: 973px; background: #e6e6e6; font-family: Roboto, "Noto Sans", sans-serif; color: #595959; overflow: hidden; }
* { box-sizing: border-box; }
svg { flex: none; display: block; }
.toolbar { height: 54px; padding: 0 13px; display: flex; align-items: center; background: linear-gradient(#fff, #f0f0f0); border-bottom: 1px solid #d4d4d4; }
button { font: 700 16px "Noto Sans", Roboto, sans-serif; color: #595959; padding: 0; margin: 0; }
.btn, .group { height: 35px; border: 1px solid #aaa; border-radius: 3px; background: linear-gradient(#fff, #e6e6e6); display: flex; align-items: center; }
.nav { width: 74px; margin-right: 10px; padding: 0 13px 2px 12px; justify-content: space-between; }
.save { width: 79px; justify-content: center; color: #999; border-color: #c8c8c8; padding-bottom: 2px; font-size: 15.500px; }
.caret { width: 0; height: 0; border: 5.500px solid transparent; border-top: 8px solid #595959; border-bottom: 0; }
.app-dot { margin: 0 10px 2px 18px; }
.app-name { font: 700 15.500px/20px "Noto Sans", sans-serif; letter-spacing: -.4px; color: #4d4d4d; padding-bottom: 2px; }
.right { margin-left: auto; display: flex; gap: 10px; }
.story { width: 78px; padding: 0 12px 2px 20px; justify-content: space-between; }
.mark { width: 68px; padding: 0 12px 2px 20px; justify-content: space-between; }
.seg { height: 33px; border: 0; border-right: 1px solid #aaa; background: none; display: flex; align-items: center; padding-bottom: 2px; }
.edit { width: 133px; padding-left: 21px; gap: 28px; font-size: 15.500px; letter-spacing: -.2px; }
.sheet { width: 257px; padding-left: 12px; }
.sheet span { font-size: 16px; letter-spacing: -.85px; width: 179px; white-space: nowrap; text-align: left; font-family: "Open Sans", "Noto Sans", sans-serif; letter-spacing: -.3px; }
.sheet svg { margin: 0 10px 0 9px; }
.arrow { width: 54px; justify-content: center; }
.last { width: 53px; border-right: 0; }
.selections { height: 46px; display: flex; border-bottom: 1px solid #d2d2d2; }
.sel-tools { width: 222px; background: #f2f2f2; border-right: 1px solid #d2d2d2; display: flex; align-items: center; gap: 29.500px; padding-left: 14.500px; }
.sel-text { flex: 1; display: flex; align-items: center; padding: 2px 0 0 13px; font-size: 20px; font-weight: 300; letter-spacing: -.6px; color: #707070; }
.sel-mode { width: 57px; background: #f2f2f2; border: solid #d6d6d6; border-width: 0 1px; display: flex; align-items: center; padding-left: 17px; }
.insights { width: 145px; background: #f2f2f2; display: flex; align-items: center; gap: 12px; padding-left: 27px; font: 700 15.500px "Noto Sans", sans-serif; letter-spacing: -.1px; color: #404040; }
h1 { margin: 0; height: 64px; padding: 0 0 5px 19px; display: flex; align-items: center; font-size: 28px; font-weight: 300; letter-spacing: .16px; color: #a2a2a2; }
.sheet-body { width: 1908px; height: 803px; margin: 0 6px; background: #fff; }
h2 { margin: 0; height: 40px; line-height: 30px; font-size: 19.300px; font-weight: 700; color: #7f7f7f; white-space: nowrap; }
.t1 { height: 34px; padding-left: 6px; line-height: 36px; letter-spacing: -.15px; }
.t2 { letter-spacing: -.05px; }
.t3 { letter-spacing: -.3px; }
.row { display: flex; }
.bar-col { width: 483px; }
.bar-col h2 { padding-left: 6px; }
.map-col { width: 1230px; }
.legend { flex: 1; padding: 40px 6px 0 1px; }
.legend-box { border-top: 1px solid #b3b3b3; }
.num { font-family: Inter, sans-serif; font-weight: 300; font-feature-settings: "tnum"; fill: #555; }
.mono { font-family: "Liberation Mono", monospace; fill: #555; }
.cat { fill: #666; }
.axis { font: 300 15.500px Roboto, sans-serif; fill: #1f1f1f; }
.leg { font-size: 15px; }
.scale { font: 700 13.500px Roboto, sans-serif; fill: #4d4d4d; stroke: #fff; stroke-width: 2; paint-order: stroke; }
.credit { font: 400 13.800px Roboto, sans-serif; fill: #333; stroke: #fff; stroke-width: 3; stroke-opacity: .7; paint-order: stroke; }
</style>
